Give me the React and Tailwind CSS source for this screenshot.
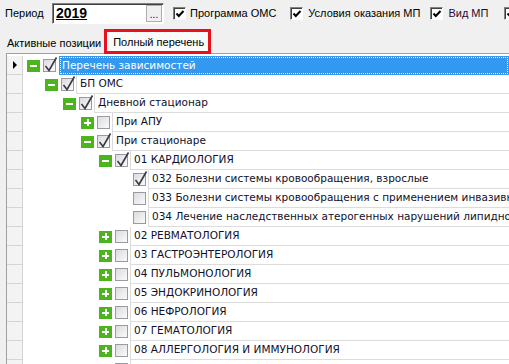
import React from "react";

const rows = [
  { level: 0, text: "Перечень зависимостей", exp: "-", checked: true, selected: true },
  { level: 1, text: "БП ОМС", exp: "-", checked: true },
  { level: 2, text: "Дневной стационар", exp: "-", checked: true },
  { level: 3, text: "При АПУ", exp: "+", checked: false },
  { level: 3, text: "При стационаре", exp: "-", checked: true },
  { level: 4, text: "01 КАРДИОЛОГИЯ", exp: "-", checked: true },
  { level: 5, text: "032 Болезни системы кровообращения, взрослые", checked: true },
  { level: 5, text: "033 Болезни системы кровообращения с применением инвазивных методов", checked: false },
  { level: 5, text: "034 Лечение наследственных атерогенных нарушений липидного обмена", checked: false },
  { level: 4, text: "02 РЕВМАТОЛОГИЯ", exp: "+", checked: false },
  { level: 4, text: "03 ГАСТРОЭНТЕРОЛОГИЯ", exp: "+", checked: false },
  { level: 4, text: "04 ПУЛЬМОНОЛОГИЯ", exp: "+", checked: false },
  { level: 4, text: "05 ЭНДОКРИНОЛОГИЯ", exp: "+", checked: false },
  { level: 4, text: "06 НЕФРОЛОГИЯ", exp: "+", checked: false },
  { level: 4, text: "07 ГЕМАТОЛОГИЯ", exp: "+", checked: false },
  { level: 4, text: "08 АЛЛЕРГОЛОГИЯ И ИММУНОЛОГИЯ", exp: "+", checked: false },
  { level: 4, text: "09 ДЕРМАТОЛОГИЯ", exp: "+", checked: false },
];

const Expander = ({ sign }) => (
  <div className="w-[13px] h-[12px] bg-[#4cb41c] relative shrink-0">
    <div className="absolute left-[3px] top-[5px] w-[7px] h-[2px] bg-white" />
    {sign === "+" && <div className="absolute left-[5.5px] top-[2.5px] w-[2px] h-[7px] bg-white" />}
  </div>
);

const TreeCheck = ({ checked }) => (
  <div className="w-[13px] h-[13px] border border-[#9a9aa4] bg-gradient-to-br from-[#dcdce0] to-[#fafafa] relative shrink-0">
    {checked && (
      <svg className="absolute -left-[1px] -top-[4px]" width="16" height="17" viewBox="0 0 16 17">
        <path d="M2.5 10 L6 14.5 L13.5 1.5" fill="none" stroke="#3a3a44" strokeWidth="1.6" />
      </svg>
    )}
  </div>
);

const WinCheck = () => (
  <div className="w-[13px] h-[13px] bg-white border-t border-l border-[#808080] border-b border-r border-b-white border-r-white shadow-[inset_1px_1px_0_#404040] relative shrink-0">
    <svg className="absolute left-[1px] top-[1px]" width="10" height="10" viewBox="0 0 10 10">
      <path d="M1.5 4.5 L3.8 7 L8.5 2" fill="none" stroke="#000" strokeWidth="2" />
    </svg>
  </div>
);

const Row = ({ row, first }) => (
  <div className="flex h-[19px]">
    <div className="w-[16px] shrink-0 bg-[#f3f3f3] border-r border-b border-[#d4d4d4] flex items-center justify-center">
      {first && <div className="w-0 h-0 border-y-[4px] border-y-transparent border-l-[4px] border-l-black" />}
    </div>
    <div className="flex items-center shrink-0" style={{ paddingLeft: 4 + row.level * 18 }}>
      {row.exp ? <Expander sign={row.exp} /> : <div className="w-[13px]" />}
      <div className="w-[3px]" />
      <TreeCheck checked={row.checked} />
      <div className="w-[2px]" />
    </div>
    <div
      className={
        row.selected
          ? "flex-1 ml-[1px] bg-[#3399f0] text-white flex items-center pl-[3px] whitespace-nowrap overflow-hidden outline-1 outline-dotted outline-white -outline-offset-2"
          : "flex-1 border-l border-b border-[#dcdcdc] text-[#10102a] flex items-center pl-[3px] whitespace-nowrap overflow-hidden"
      }
    >
      {row.text}
    </div>
  </div>
);

export default function App() {
  return (
    <div
      className="w-[509px] h-[364px] bg-[#f0f0f0] overflow-hidden text-[#000] flex flex-col whitespace-nowrap"
      style={{ fontFamily: '"Liberation Sans", Arial, sans-serif' }}
    >
      <div className="h-[26px] flex items-center text-[11px] shrink-0 pt-[1px]">
        <span className="ml-[5px] w-[47px] shrink-0">Период</span>
        <div className="w-[112px] h-[21px] shrink-0 bg-white border-t border-l border-[#808080] border-b border-r border-b-[#ffffff] border-r-[#ffffff] shadow-[inset_1px_1px_0_#404040] flex items-center">
          <span className="ml-[3px] font-bold underline text-[14px] flex-1">2019</span>
          <div className="w-[16px] h-[17px] mr-[1px] bg-[#f0f0f0] border border-[#adadad] text-[10px] flex items-end justify-center leading-[12px]">...</div>
        </div>
        <div className="ml-[9px]"><WinCheck /></div>
        <span className="ml-[4px] shrink-0">Программа ОМС</span>
        <div className="ml-[14px]"><WinCheck /></div>
        <span className="ml-[5px] shrink-0">Условия оказания МП</span>
        <div className="ml-[10px]"><WinCheck /></div>
        <span className="ml-[5px] shrink-0 text-[#2a0a30]">Вид МП</span>
        <div className="ml-[16px]"><WinCheck /></div>
      </div>

      <div className="h-[27px] flex items-end text-[11px] shrink-0 relative">
        <div className="ml-[3px] h-[19px] pl-[4px] pr-[3px] flex items-center bg-[#f0f0f0] shrink-0">
          Активные позиции
        </div>
        <div className="h-[25px] w-[107px] shrink-0 flex items-stretch border-[3px] border-[#e8101c] -mb-[1px] bg-[#f0f0f0] z-10">
          <div className="flex-1 bg-[#fafafa] flex items-start pt-[2px] pl-[6px]">Полный перечень</div>
        </div>
      </div>

      <div
        className="flex-1 ml-[6px] bg-white border-t border-l border-[#a0a0a0] pt-[2px] text-[10.5px]"
        style={{ fontFamily: '"DejaVu Sans", Verdana, sans-serif' }}
      >
        {rows.map((r, i) => (
          <Row key={i} row={r} first={i === 0} />
        ))}
      </div>
    </div>
  );
}
